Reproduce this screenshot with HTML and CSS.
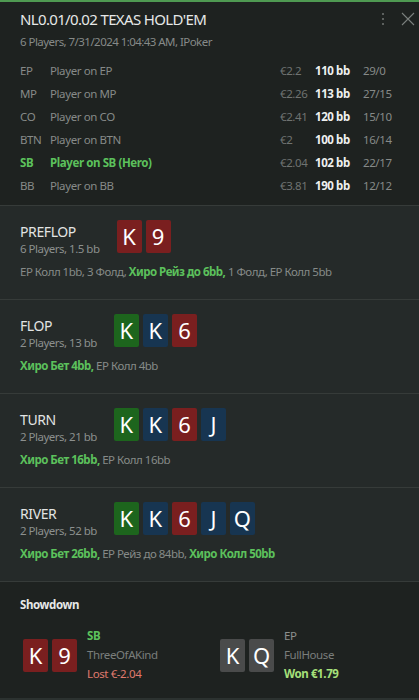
FILE: index.html
```html
<!DOCTYPE html>
<html>
<head>
<meta charset="utf-8">
<link rel="stylesheet" href="styles.css">
</head>
<body>
<div class="panel">
  <header class="head">
    <div class="head-top">
      <h1 class="title">NL0.01/0.02 TEXAS HOLD'EM</h1>
      <div class="head-icons">
        <svg width="6" height="14" viewBox="0 0 6 14"><circle cx="3" cy="2" r="1.1" fill="#6c716e"/><circle cx="3" cy="7" r="1.1" fill="#6c716e"/><circle cx="3" cy="12" r="1.1" fill="#6c716e"/></svg>
        <svg width="14" height="14" viewBox="0 0 14 14"><path d="M1 1L13 13M13 1L1 13" stroke="#7b807d" stroke-width="1.1"/></svg>
      </div>
    </div>
    <div class="sub">6 Players, 7/31/2024 1:04:43 AM, IPoker</div>
    <div class="players">
      <div class="prow"><span class="pos">EP</span><span class="name">Player on EP</span><span class="money">€2.2</span><span class="bb">110 bb</span><span class="stat">29/0</span></div>
      <div class="prow"><span class="pos">MP</span><span class="name">Player on MP</span><span class="money">€2.26</span><span class="bb">113 bb</span><span class="stat">27/15</span></div>
      <div class="prow"><span class="pos">CO</span><span class="name">Player on CO</span><span class="money">€2.41</span><span class="bb">120 bb</span><span class="stat">15/10</span></div>
      <div class="prow"><span class="pos">BTN</span><span class="name">Player on BTN</span><span class="money">€2</span><span class="bb">100 bb</span><span class="stat">16/14</span></div>
      <div class="prow hero"><span class="pos">SB</span><span class="name">Player on SB (Hero)</span><span class="money">€2.04</span><span class="bb">102 bb</span><span class="stat">22/17</span></div>
      <div class="prow"><span class="pos">BB</span><span class="name">Player on BB</span><span class="money">€3.81</span><span class="bb">190 bb</span><span class="stat">12/12</span></div>
    </div>
  </header>

  <section class="street">
    <div class="street-top">
      <div class="street-info">
        <div class="street-name">PREFLOP</div>
        <div class="street-sub">6 Players, 1.5 bb</div>
      </div>
      <div class="cards"><span class="card red">K</span><span class="card red">9</span></div>
    </div>
    <div class="actions">EP Колл 1bb, 3 Фолд, <b class="hg">Хиро Рейз до 6bb,</b> 1 Фолд, EP Колл 5bb</div>
  </section>

  <section class="street">
    <div class="street-top">
      <div class="street-info">
        <div class="street-name">FLOP</div>
        <div class="street-sub">2 Players, 13 bb</div>
      </div>
      <div class="cards"><span class="card green">K</span><span class="card blue">K</span><span class="card red">6</span></div>
    </div>
    <div class="actions"><b class="hg">Хиро Бет 4bb,</b> EP Колл 4bb</div>
  </section>

  <section class="street">
    <div class="street-top">
      <div class="street-info">
        <div class="street-name">TURN</div>
        <div class="street-sub">2 Players, 21 bb</div>
      </div>
      <div class="cards"><span class="card green">K</span><span class="card blue">K</span><span class="card red">6</span><span class="card blue">J</span></div>
    </div>
    <div class="actions"><b class="hg">Хиро Бет 16bb,</b> EP Колл 16bb</div>
  </section>

  <section class="street">
    <div class="street-top">
      <div class="street-info">
        <div class="street-name">RIVER</div>
        <div class="street-sub">2 Players, 52 bb</div>
      </div>
      <div class="cards"><span class="card green">K</span><span class="card blue">K</span><span class="card red">6</span><span class="card blue">J</span><span class="card blue">Q</span></div>
    </div>
    <div class="actions"><b class="hg">Хиро Бет 26bb,</b> EP Рейз до 84bb, <b class="hg">Хиро Колл 50bb</b></div>
  </section>

  <section class="showdown">
    <div class="sd-title">Showdown</div>
    <div class="sd-row">
      <div class="sd-player">
        <div class="cards"><span class="card red">K</span><span class="card red">9</span></div>
        <div class="sd-info">
          <div class="sd-pos hg">SB</div>
          <div class="sd-hand">ThreeOfAKind</div>
          <div class="sd-res lost">Lost €-2.04</div>
        </div>
      </div>
      <div class="sd-player">
        <div class="cards"><span class="card gray">K</span><span class="card gray">Q</span></div>
        <div class="sd-info">
          <div class="sd-pos">EP</div>
          <div class="sd-hand">FullHouse</div>
          <div class="sd-res won">Won €1.79</div>
        </div>
      </div>
    </div>
  </section>
</div>
</body>
</html>
```

FILE: styles.css
```css
* { box-sizing: border-box; margin: 0; padding: 0; }
html, body { background: #1e2220; }
body {
  font-family: "Noto Sans", "Open Sans", sans-serif;
  color: #8c908e;
  width: 419px;
  height: 700px;
  overflow: hidden;
}
.panel {
  border-top: 2px solid #4f9a52;
  height: 700px;
  display: flex;
  flex-direction: column;
}
.head {
  background: #1e2220;
  padding: 7px 20px 8px 20px;
  border-bottom: 1px solid #363b39;
}
.head-top { display: flex; justify-content: space-between; align-items: flex-start; }
.title {
  font-weight: 400;
  font-size: 15px;
  color: #e6e8e7;
  letter-spacing: -0.65px;
  line-height: 20px;
}
.head-icons {
  display: flex;
  gap: 15px;
  align-items: center;
  margin-right: -16px;
  margin-top: 3px;
}
.sub {
  font-size: 11.5px;
  line-height: 16px;
  margin-top: 5px;
  letter-spacing: -0.55px;
  color: #868a88;
}
.players { margin-top: 9px; }
.prow {
  display: flex;
  font-size: 11.5px;
  height: 23px;
  align-items: center;
  letter-spacing: -0.4px;
  color: #868a88;
}
.pos { width: 30px; }
.name { flex: 1; }
.money { width: 35px; color: #6f7371; }
.bb { width: 48px; color: #eef0ef; font-weight: 700; }
.stat { width: 36px; }
.prow.hero .pos, .prow.hero .name { color: #5cc15c; font-weight: 700; }

.street {
  background: #252a29;
  border-bottom: 1px solid #363b39;
  padding: 14px 20px 0 20px;
  height: 94px;
}
.street-top { display: flex; align-items: flex-start; gap: 17px; }
.street-info { padding-top: 3px; }
.street-name {
  font-size: 14px;
  color: #e2e4e3;
  line-height: 18px;
  letter-spacing: -0.4px;
}
.street-sub {
  font-size: 11.5px;
  line-height: 16px;
  letter-spacing: -0.5px;
}
.cards { display: flex; gap: 4px; }
.card {
  width: 25px;
  height: 33px;
  border-radius: 2px;
  color: #ffffff;
  font-size: 22px;
  line-height: 33px;
  text-align: center;
}
.card.red { background: #7a1f1f; }
.card.green { background: #1d651d; }
.card.blue { background: #173551; }
.card.gray { background: #4a4b4b; }
.actions {
  font-size: 11.5px;
  margin-top: 7px;
  letter-spacing: -0.5px;
  color: #868a88;
}
.hg { color: #5cc15c; font-weight: 700; }

.showdown {
  flex: 1;
  background: #1e2220;
  padding: 15px 20px 0 20px;
  border-bottom: 2px solid #2c3230;
}
.sd-title {
  font-size: 11.5px;
  font-weight: 700;
  color: #e6e8e7;
  letter-spacing: -0.4px;
}
.sd-row { display: flex; margin-top: 15px; padding-left: 3px; }
.sd-player { display: flex; gap: 10px; align-items: center; width: 197px; flex-shrink: 0; }
.sd-info { font-size: 11.5px; line-height: 19px; letter-spacing: -0.4px; }
.sd-pos { line-height: 18px; }
.sd-hand { color: #7a7e7c; }
.lost { color: #e07a6e; }
.won { color: #a6e07a; font-weight: 700; }
```
